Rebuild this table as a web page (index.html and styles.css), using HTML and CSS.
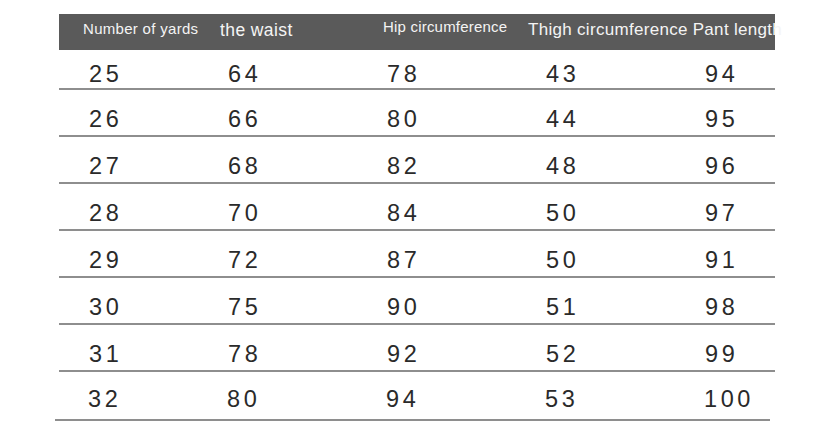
FILE: index.html
```html
<!DOCTYPE html>
<html>
<head>
<meta charset="utf-8">
<link rel="stylesheet" href="styles.css">
</head>
<body>
<div class="sheet">
  <div class="head">
    <span class="h h-yards">Number of yards</span>
    <span class="h h-waist">the waist</span>
    <span class="h h-hip">Hip circumference</span>
    <span class="h h-thigh">Thigh circumference Pant length</span>
  </div>
  <div class="row first"><span>25</span><span>64</span><span>78</span><span>43</span><span>94</span></div>
  <div class="row"><span>26</span><span>66</span><span>80</span><span>44</span><span>95</span></div>
  <div class="row"><span>27</span><span>68</span><span>82</span><span>48</span><span>96</span></div>
  <div class="row"><span>28</span><span>70</span><span>84</span><span>50</span><span>97</span></div>
  <div class="row"><span>29</span><span>72</span><span>87</span><span>50</span><span>91</span></div>
  <div class="row"><span>30</span><span>75</span><span>90</span><span>51</span><span>98</span></div>
  <div class="row"><span>31</span><span>78</span><span>92</span><span>52</span><span>99</span></div>
  <div class="row last"><span>32</span><span>80</span><span>94</span><span>53</span><span>100</span></div>
</div>
</body>
</html>
```
FILE: styles.css
```css
html, body {
  margin: 0;
  padding: 0;
  background: #ffffff;
}
body {
  font-family: "Liberation Sans", Arial, sans-serif;
  overflow: hidden;
}
.sheet {
  margin: 14px 0 0 59px;
  width: 716px;
}
.head {
  height: 36px;
  background: #5a5a5a;
  color: #f4f4f4;
  display: grid;
  grid-template-columns: 137px 163px 145px 1fr;
  padding-left: 24px;
  white-space: nowrap;
  overflow: visible;
}
.h {
  display: block;
}
.h-yards {
  font-size: 15px;
  letter-spacing: 0.3px;
  padding-top: 6px;
}
.h-waist {
  font-size: 17.5px;
  letter-spacing: 0.4px;
  padding-top: 6px;
}
.h-hip {
  font-size: 15px;
  letter-spacing: 0.2px;
  padding-top: 4px;
}
.h-thigh {
  font-size: 17px;
  letter-spacing: 0.3px;
  padding-top: 6px;
}
.row {
  box-sizing: border-box;
  height: 47px;
  border-bottom: 2px solid #8e8e8e;
  display: grid;
  grid-template-columns: 139px 159px 159px 159px 1fr;
  padding-left: 30px;
  padding-top: 17px;
  font-size: 23.5px;
  line-height: 24px;
  letter-spacing: 3.6px;
  color: #2a2a2a;
}
.row.first {
  height: 40px;
  padding-top: 12px;
}
.row.last {
  height: 49px;
  padding-top: 15px;
  margin-left: -4px;
  padding-left: 33px;
  width: 715px;
}
```
